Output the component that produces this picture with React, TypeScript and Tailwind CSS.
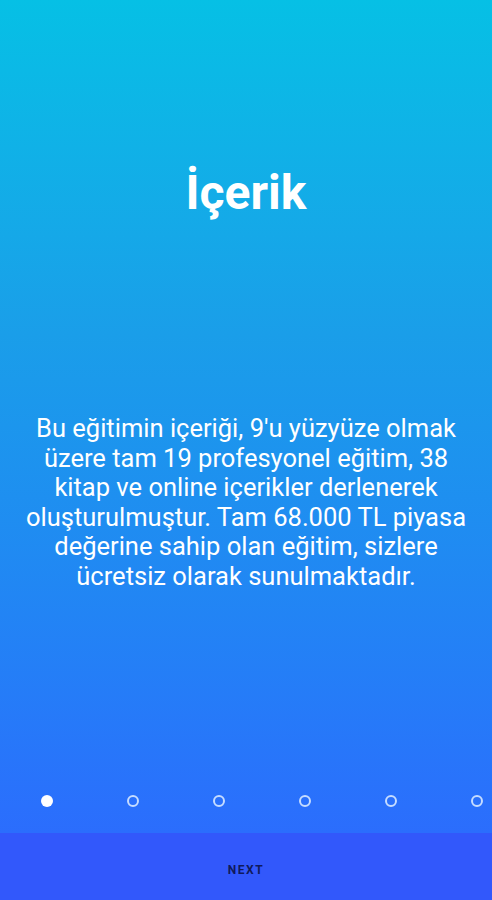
import React from "react";

export default function App() {
  const dots = [0, 1, 2, 3, 4, 5];
  return (
    <div
      className="w-[492px] h-[900px] flex flex-col overflow-hidden"
      style={{ fontFamily: "Roboto, 'Noto Sans', sans-serif" }}
    >
      <div className="h-[833px] flex flex-col bg-gradient-to-b from-[#06c0e5] via-[#1a9ee9] via-40% to-[#2b6dfd]">
        <h1 className="mt-[163px] text-center text-white font-bold text-[48px] leading-[60px]">
          İçerik
        </h1>
        <p className="mt-[191px] px-[18px] text-center text-white text-[25.5px] leading-[29.6px]">
          Bu eğitimin içeriği, 9'u yüzyüze olmak üzere tam 19 profesyonel eğitim, 38 kitap ve online içerikler derlenerek oluşturulmuştur. Tam 68.000 TL piyasa değerine sahip olan eğitim, sizlere ücretsiz olarak sunulmaktadır.
        </p>
        <div className="mt-auto mb-[26px] flex pl-[41px] gap-[74px]">
          {dots.map((d) => (
            <div
              key={d}
              className={
                d === 0
                  ? "w-[12px] h-[12px] shrink-0 rounded-full bg-white"
                  : "w-[12px] h-[12px] shrink-0 rounded-full border-[2px] border-[#c5dcff]"
              }
            />
          ))}
        </div>
      </div>
      <div className="flex-1 bg-[#3258fb] flex items-center justify-center pt-[6px]">
        <span className="text-[12px] font-bold tracking-[1.5px] text-[#101a5c]">NEXT</span>
      </div>
    </div>
  );
}
